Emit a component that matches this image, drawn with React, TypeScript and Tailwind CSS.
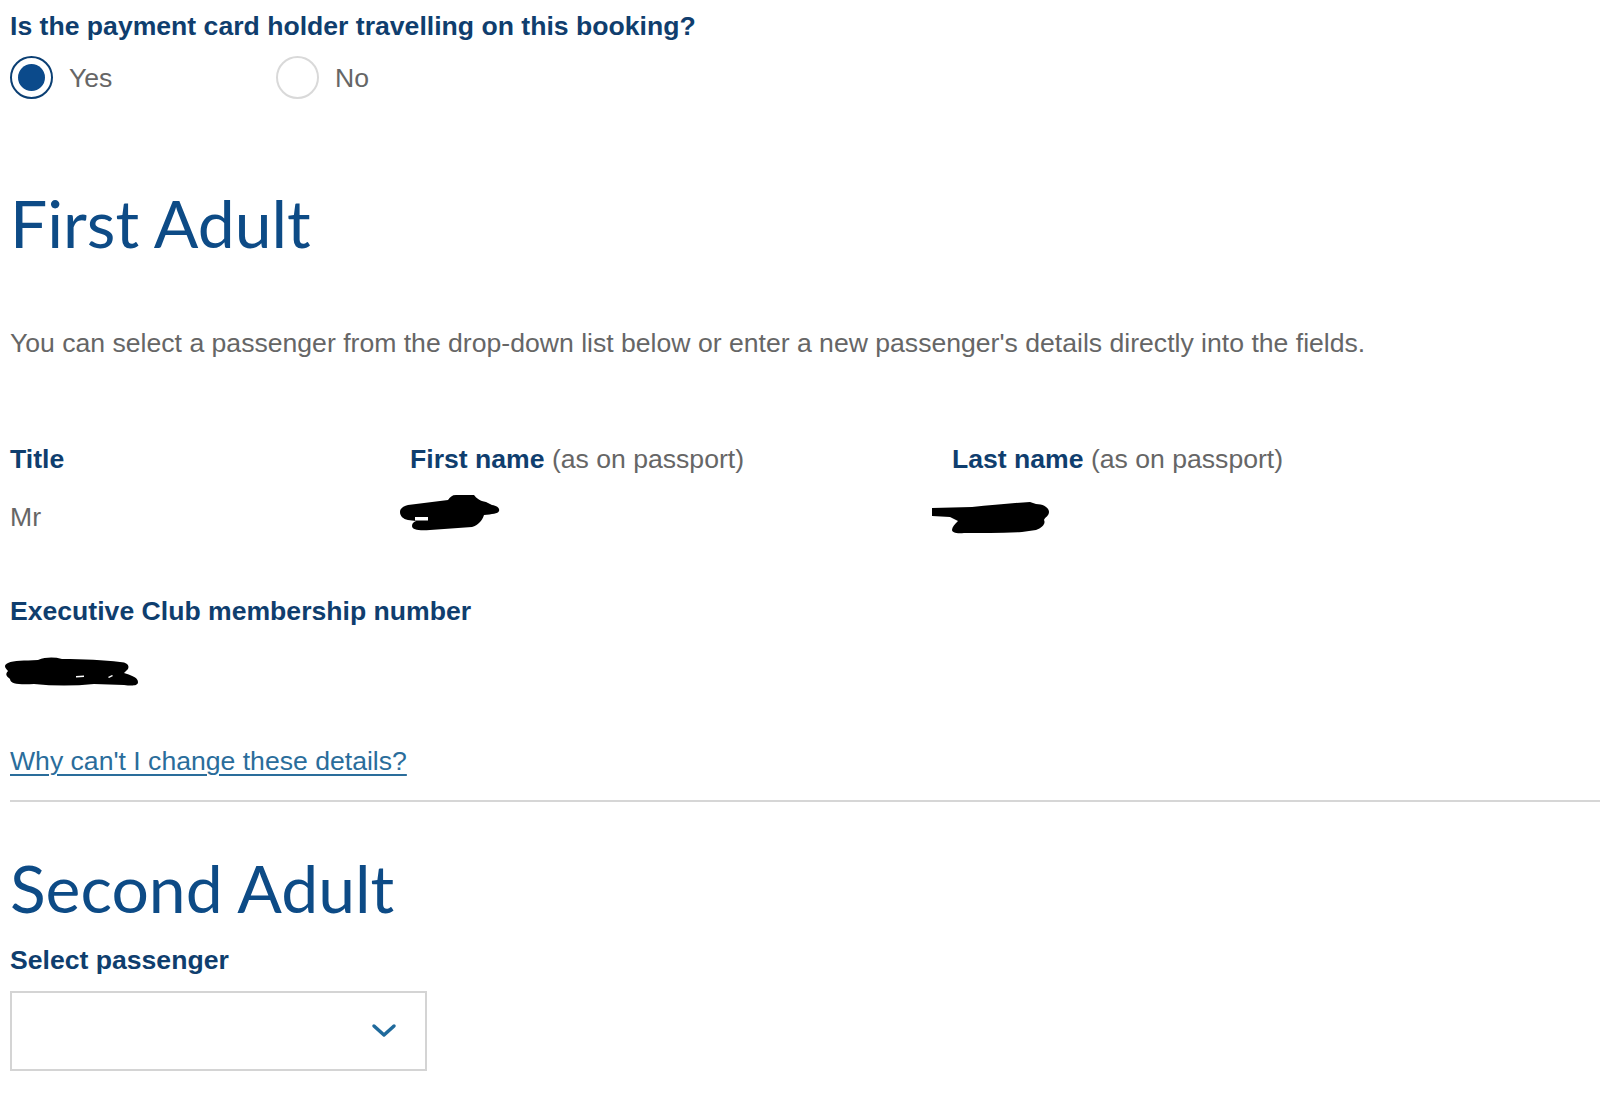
import React from "react";

const body = "font-['Liberation_Sans',Arial,sans-serif]";
const display = "font-['Lato','Open_Sans',sans-serif]";

function Radio({ checked, label, className = "" }: { checked?: boolean; label: string; className?: string }) {
  return (
    <label className={`flex items-center gap-[16px] ${className}`}>
      <span
        className={
          checked
            ? "flex h-[43px] w-[43px] items-center justify-center rounded-full border-[2px] border-[#0b3f73] bg-white"
            : "flex h-[43px] w-[43px] items-center justify-center rounded-full border-[2px] border-[#d9d9d9] bg-white"
        }
      >
        {checked ? <span className="h-[27px] w-[27px] rounded-full bg-[#0b4a8b]" /> : null}
      </span>
      <span className="text-[26.6px] leading-[32px] text-[#666666]">{label}</span>
    </label>
  );
}

// scribbled-out personal data in the screenshot
function Redacted({
  d,
  w,
  h,
  marks = [],
  className = "",
}: {
  d: string;
  w: number;
  h: number;
  marks?: string[];
  className?: string;
}) {
  return (
    <svg width={w} height={h} viewBox={`0 0 ${w} ${h}`} className={className}>
      <path d={d} fill="#000" />
      {marks.map((m) => (
        <path key={m} d={m} fill="#fff" />
      ))}
    </svg>
  );
}

export default function App() {
  return (
    <div className={`min-h-[1120px] bg-white pl-[10px] ${body}`}>
      <div className="pt-[10px]">
        <h2 className="text-[26.6px] font-bold leading-[32px] text-[#0f3e6e]">
          Is the payment card holder travelling on this booking?
        </h2>
        <div className="mt-[14px] flex">
          <Radio checked label="Yes" className="w-[266px]" />
          <Radio label="No" />
        </div>
      </div>

      <h1 className={`mt-[84px] text-[66px] leading-[80px] text-[#0d4b86] ${display}`}>First Adult</h1>

      <p className="mt-[64px] text-[26.6px] leading-[32px] text-[#666666]">
        You can select a passenger from the drop-down list below or enter a new passenger's details directly into the
        fields.
      </p>

      <div className="mt-[84px] grid grid-cols-[400px_542px_1fr] items-start text-[26.6px] leading-[32px]">
        <div className="font-bold text-[#0f3e6e]">Title</div>
        <div>
          <span className="font-bold text-[#0f3e6e]">First name</span>{" "}
          <span className="text-[#666666]">(as on passport)</span>
        </div>
        <div>
          <span className="font-bold text-[#0f3e6e]">Last name</span>{" "}
          <span className="text-[#666666]">(as on passport)</span>
        </div>

        <div className="mt-[26px] text-[#666666]">Mr</div>
        <div className="-ml-[10px] mt-[20px]">
          <Redacted
            w={100}
            h={36}
            d="M0 17 C0 13 4 11 8 10 L48 5 C50 2 52 0 56 0 L74 0 C76 3 80 6 86 7 L92 10 C97 11 100 13 99 16 C98 19 92 19 84 20 C82 26 78 30 72 32 L30 35 C20 36 12 35 12 31 C12 28 14 27 16 26 L8 25 C3 24 0 21 0 17 Z"
            marks={["M15 22 L28 22 L28 25.5 L15 25.5 Z"]}
          />
        </div>
        <div className="-ml-[20px] mt-[25px]">
          <Redacted
            w={118}
            h={34}
            d="M0 8 L40 7 C60 5 80 3 98 2 L104 4 C112 4 117 8 117 12 C117 16 113 17 112 20 C114 24 110 28 104 30 L90 32 C70 33 50 33 32 33 C24 34 20 32 20 30 C20 27 23 24 26 21 L18 17 L0 16 Z"
          />
        </div>
      </div>

      <div className="mt-[61px] text-[26.6px] font-bold leading-[32px] text-[#0f3e6e]">
        Executive Club membership number
      </div>
      <div className="-ml-[6px] mt-[30px]">
        <Redacted
          w={136}
          h={30}
          d="M4 6 C10 3 20 4 34 3 C42 0 50 0 58 2 C80 2 100 3 116 5 C122 5 126 8 124 12 L120 16 C126 18 134 20 134 25 C134 29 128 29 120 28 L90 27 C70 29 50 29 30 27 C16 28 6 27 6 22 C4 20 0 18 4 14 C0 10 0 8 4 6 Z"
          marks={["M72 19 L80 18.5 L80 20 L72 20.5 Z", "M104 20 L108 18 L109 19 L105 21 Z"]}
        />
      </div>

      <a
        href="#"
        className="mt-[58px] inline-block text-[26.6px] leading-[32px] text-[#2a6d9b] underline decoration-[1.5px] underline-offset-[4px]"
      >
        Why can't I change these details?
      </a>

      <div className="mt-[23px] h-[2px] bg-[#d6d6d6]" />

      <h1 className={`mt-[46px] text-[66px] leading-[80px] text-[#0d4b86] ${display}`}>Second Adult</h1>

      <div className="mt-[16px] text-[26.6px] font-bold leading-[32px] text-[#0f3e6e]">Select passenger</div>

      <div className="mt-[15px] flex h-[80px] w-[417px] items-center justify-end border-[2px] border-[#d4d4d4] pr-[28px]">
        <svg
          width="26"
          height="16"
          viewBox="0 0 26 16"
          fill="none"
          stroke="#1f6a9c"
          strokeWidth="3.5"
          strokeLinecap="round"
          strokeLinejoin="round"
        >
          <path d="M3 3 L13 12 L23 3" />
        </svg>
      </div>
    </div>
  );
}
